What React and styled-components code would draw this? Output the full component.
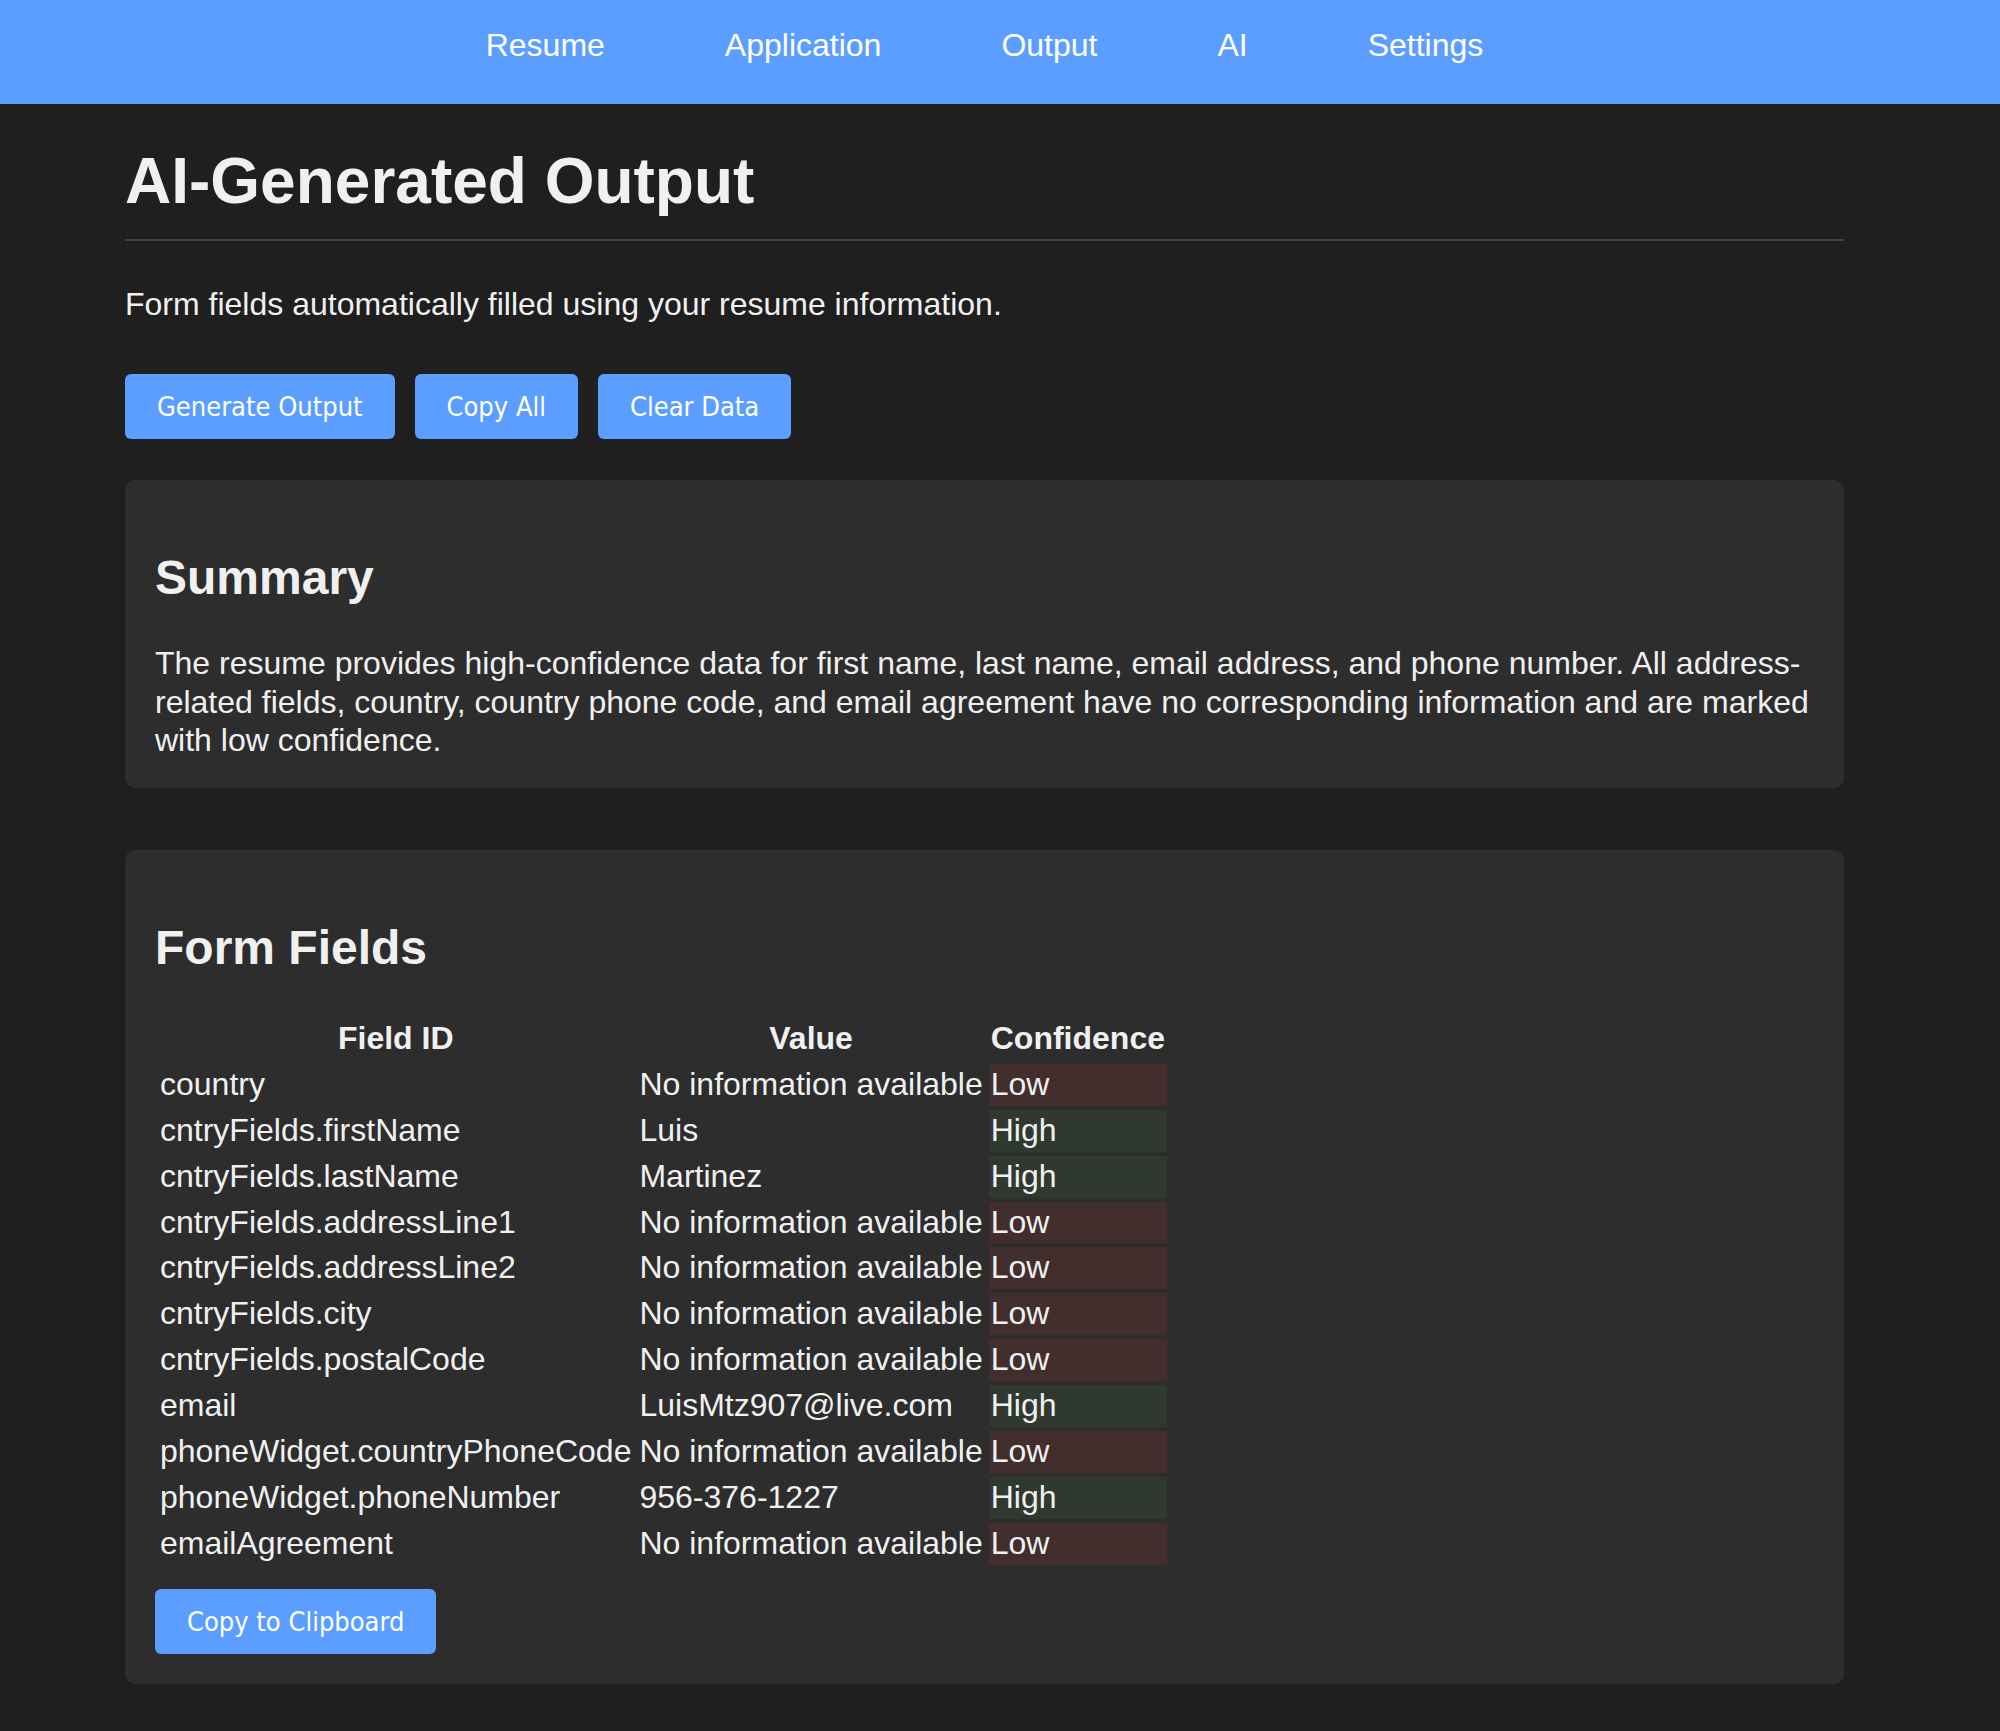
import React from 'react'
import styled, { createGlobalStyle } from 'styled-components';

const GlobalStyle = createGlobalStyle`
  html, body {
    margin: 0;
    padding: 0;
    background-color: #1f1f1f;
    font-family: "Liberation Sans", Arial, sans-serif;
    font-size: 32px;
    color: #f0f0f0;
  }
`

const Header = styled.header`
  background-color: #5c9eff;
  height: 104px;
  box-sizing: border-box;
  padding: 26.5px 31px 0 0;
`

const Nav = styled.nav`
  display: flex;
  justify-content: center;
  gap: 120px;
`

const NavLink = styled.a`
  color: #ffffff;
  font-size: 32px;
  line-height: 37.5px;
  text-decoration: none;
  cursor: pointer;
`

const Page = styled.div`
  padding-right: 31px;
  padding-bottom: 47px;
`

const Main = styled.main`
  max-width: 1719px;
  margin: 0 auto;
`

const Title = styled.h1`
  font-size: 64px;
  line-height: 73.6px;
  font-weight: bold;
  margin: 41px 0 44px;
  padding-bottom: 20.5px;
  border-bottom: 2px solid #444444;
  color: #f0f0f0;
`

const Text = styled.p`
  font-size: 32px;
  line-height: 38.2px;
  margin: 0;
  color: #f0f0f0;
`

const ButtonRow = styled.div`
  display: flex;
  gap: 20px;
  margin: 51px 0 41px;
`

const Button = styled.button`
  background-color: #5c9eff;
  color: #ffffff;
  border: none;
  border-radius: 6px;
  height: 65px;
  padding: 0 32px;
  font-family: "DejaVu Sans Condensed", "DejaVu Sans", Verdana, sans-serif;
  font-size: 27px;
  cursor: pointer;
  margin-top: ${props => props.$top || '0'};
`

const Card = styled.section`
  background-color: #2d2d2d;
  border-radius: 10px;
  padding: 30px 30px ${props => props.$bottom || '30px'};
  margin-bottom: ${props => props.$gap || '0'};
`

const CardTitle = styled.h2`
  font-size: 48px;
  line-height: 55px;
  font-weight: bold;
  margin: 40px 0 39px;
  color: #f0f0f0;
`

const Table = styled.table`
  border-collapse: separate;
  border-spacing: 4.3px 4px;
  margin-left: -1px;
`

const Th = styled.th`
  font-size: 32px;
  line-height: 37.9px;
  font-weight: bold;
  padding: 2px 2px;
  text-align: center;
`

const Td = styled.td`
  font-size: 32px;
  line-height: 37.9px;
  padding: 2px 2px;
  white-space: nowrap;
  background-color: ${props =>
    props.$level === 'Low' ? '#412e2d' : props.$level === 'High' ? '#2f3930' : 'transparent'};
`

const fields = [
  ['country', 'No information available', 'Low'],
  ['cntryFields.firstName', 'Luis', 'High'],
  ['cntryFields.lastName', 'Martinez', 'High'],
  ['cntryFields.addressLine1', 'No information available', 'Low'],
  ['cntryFields.addressLine2', 'No information available', 'Low'],
  ['cntryFields.city', 'No information available', 'Low'],
  ['cntryFields.postalCode', 'No information available', 'Low'],
  ['email', 'LuisMtz907@live.com', 'High'],
  ['phoneWidget.countryPhoneCode', 'No information available', 'Low'],
  ['phoneWidget.phoneNumber', '956-376-1227', 'High'],
  ['emailAgreement', 'No information available', 'Low'],
]

export default function App(){
  return(
    <>
      <GlobalStyle />
      <Header>
        <Nav>
          <NavLink>Resume</NavLink>
          <NavLink>Application</NavLink>
          <NavLink>Output</NavLink>
          <NavLink>AI</NavLink>
          <NavLink>Settings</NavLink>
        </Nav>
      </Header>
      <Page>
        <Main>
          <Title>AI-Generated Output</Title>
          <Text>Form fields automatically filled using your resume information.</Text>
          <ButtonRow>
            <Button>Generate Output</Button>
            <Button>Copy All</Button>
            <Button>Clear Data</Button>
          </ButtonRow>

          <Card $gap="62px" $bottom="29px">
            <CardTitle>Summary</CardTitle>
            <Text>
              The resume provides high-confidence data for first name, last name, email address, and phone number. All address-related fields, country, country phone code, and email agreement have no corresponding information and are marked with low confidence.
            </Text>
          </Card>

          <Card>
            <CardTitle>Form Fields</CardTitle>
            <Table>
              <thead>
                <tr>
                  <Th>Field ID</Th>
                  <Th>Value</Th>
                  <Th>Confidence</Th>
                </tr>
              </thead>
              <tbody>
                {fields.map(([id, value, level]) => (
                  <tr key={id}>
                    <Td>{id}</Td>
                    <Td>{value}</Td>
                    <Td $level={level}>{level}</Td>
                  </tr>
                ))}
              </tbody>
            </Table>
            <Button $top="20px">Copy to Clipboard</Button>
          </Card>
        </Main>
      </Page>
    </>
  )
}
